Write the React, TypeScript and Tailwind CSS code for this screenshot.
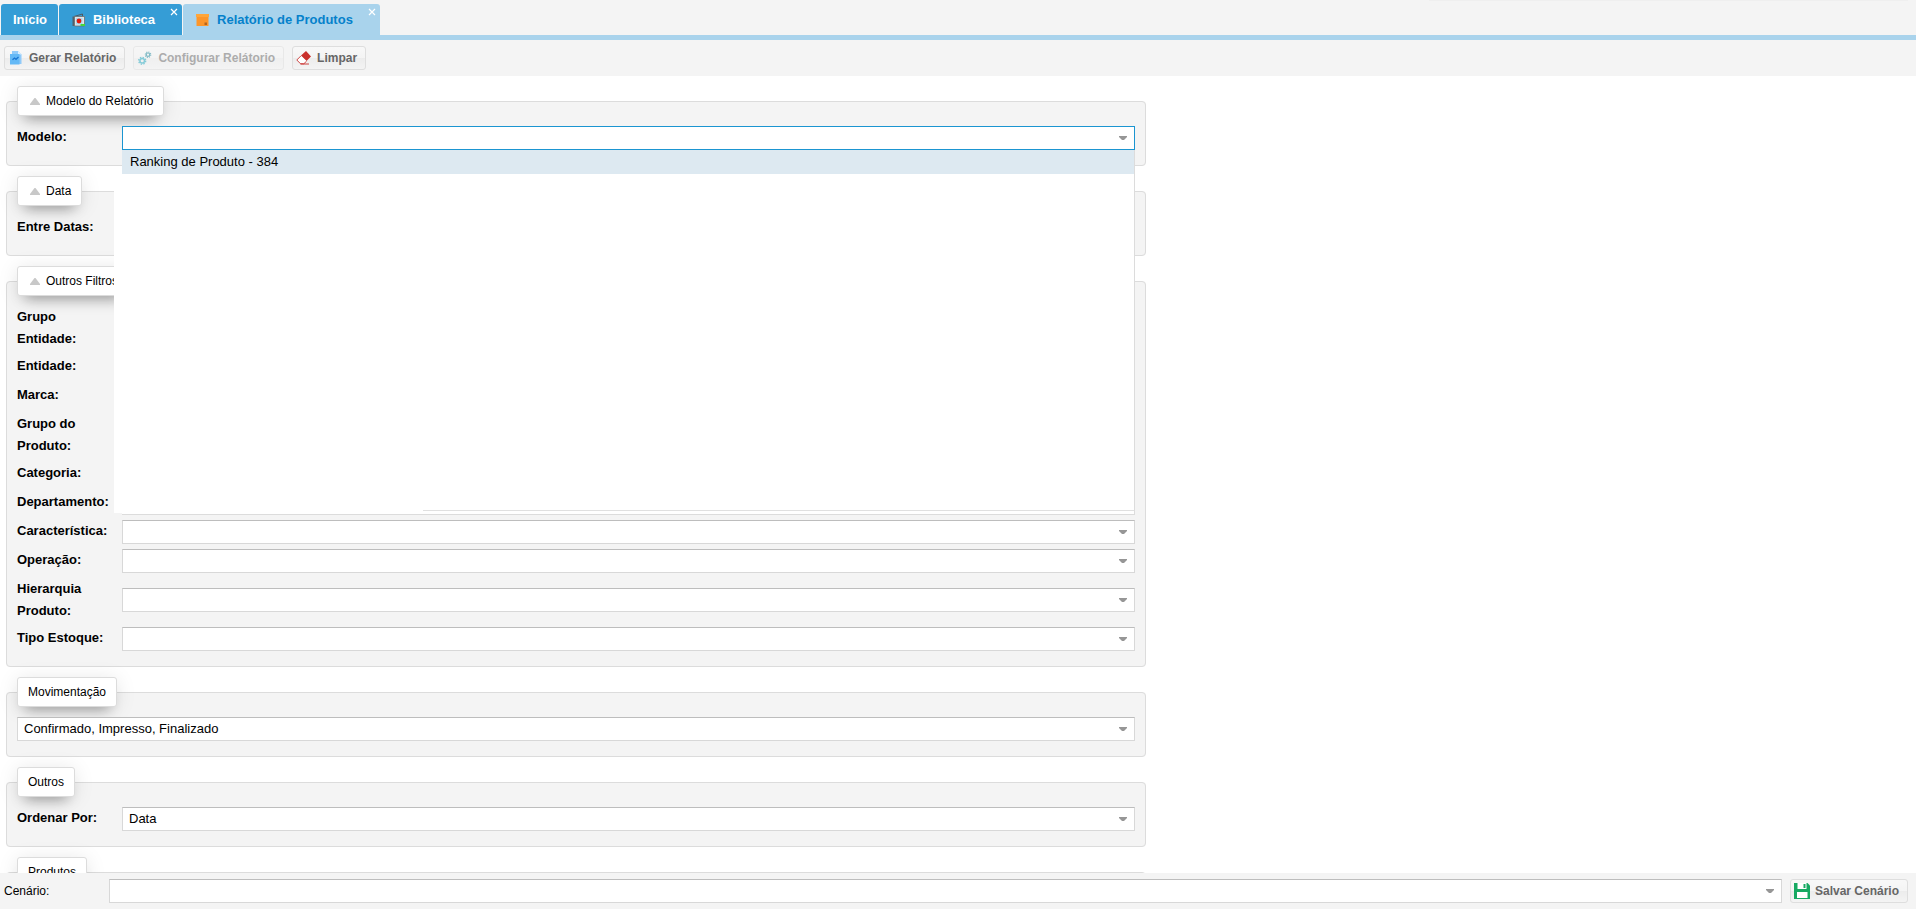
import React, {useState} from 'react'
import clsx from 'clsx'

const filterFields = [
	'Grupo Entidade',
	'Entidade',
	'Marca',
	'Grupo do Produto',
	'Categoria',
	'Departamento',
	'Característica',
	'Operação',
	'Hierarquia Produto',
	'Tipo Estoque',
]

export default function App() {
	return (
		<div className="flex h-screen flex-col bg-white font-['Liberation_Sans',Arial,sans-serif] text-xs text-black">
			<TabBar/>
			<Toolbar/>
			<main className="flex-1 overflow-y-auto px-1.5 pt-2.5 [scrollbar-width:none]">
				<form className="w-full max-w-[1140px]">
					<Panel title="Modelo do Relatório" collapsible>
						<Field label="Modelo">
							<ModelCombo/>
						</Field>
					</Panel>
					<Panel title="Data" collapsible>
						<Field label="Entre Datas">
							<Combo id="Entre Datas"/>
						</Field>
					</Panel>
					<Panel title="Outros Filtros" collapsible>
						{filterFields.map(name =>
							<Field key={name} label={name}>
								<Combo id={name}/>
							</Field>
						)}
					</Panel>
					<Panel title="Movimentação">
						<Combo id="movimentacao" label="Movimentação" options={['Confirmado, Impresso, Finalizado']}/>
					</Panel>
					<Panel title="Outros">
						<Field label="Ordenar Por">
							<Combo id="Ordenar Por" options={['Data']}/>
						</Field>
					</Panel>
					<Panel title="Produtos">
						<Combo id="produtos" label="Produtos"/>
					</Panel>
				</form>
			</main>
			<footer className="flex h-9 shrink-0 items-center bg-[#f4f4f4] pl-1 pr-2">
				<label htmlFor="cenario" className="w-[105px] shrink-0">Cenário:</label>
				<div className="mr-2 flex-1">
					<Combo id="cenario"/>
				</div>
				<ToolButton icon={<SaveIcon/>} text="Salvar Cenário"/>
			</footer>
		</div>
	)
}

const TabBar = () => (
	<nav className="shrink-0 border-b-5 border-[#a9d3ec] bg-[#f4f4f4]">
		<div className="h-1">
			<div className="mr-2 ml-auto h-px w-1/4 bg-[#efefef]"/>
		</div>
		<div className="flex gap-px pl-px">
			<Tab text="Início"/>
			<Tab text="Biblioteca" icon={<LibraryIcon/>} closable/>
			<Tab text="Relatório de Produtos" icon={<BoxIcon/>} closable active/>
		</div>
	</nav>
)

const Tab = (props: { text: string, icon?: React.ReactNode, closable?: boolean, active?: boolean }) => {
	const {text, icon, closable, active} = props
	return (
		<div
			className={clsx(
				'relative flex h-[31px] rounded-t-[3px] text-[13px] font-bold',
				active ? 'bg-[#a9d3ec] text-[#0581cb]' : 'bg-[#359dd6] text-white',
			)}
		>
			<button type="button" className={clsx('flex items-center gap-1.5 pl-3', closable ? 'pr-[27px]' : 'pr-[11px]')}>
				{icon}
				{text}
			</button>
			{closable &&
				<button type="button" aria-label="Fechar" className="absolute top-1 right-1 flex size-2 items-center justify-center text-white">
					<svg viewBox="0 0 8 8" className="size-2" stroke="currentColor" strokeWidth="1.2">
						<path d="M1 1l6 6M7 1l-6 6"/>
					</svg>
				</button>
			}
		</div>
	)
}

const Toolbar = () => (
	<div className="flex h-9 shrink-0 items-center gap-2 bg-[#f4f4f4] px-1">
		<ToolButton icon={<ReportIcon/>} text="Gerar Relatório"/>
		<ToolButton icon={<GearsIcon/>} text="Configurar Relátorio" disabled/>
		<ToolButton icon={<EraserIcon/>} text="Limpar"/>
	</div>
)

const ToolButton = (props: { icon: React.ReactNode, text: string, disabled?: boolean }) => (
	<button
		type="button"
		disabled={props.disabled}
		className="flex h-6 shrink-0 items-center gap-[5px] rounded-[3px] border border-[#dedede] bg-[linear-gradient(#f8f8f8,#f4f4f4_50%,#ececec_50%,#f4f4f4)] pr-2 pl-[3px] text-xs font-bold whitespace-nowrap text-[#666] disabled:opacity-50"
	>
		{props.icon}
		{props.text}
	</button>
)

const Panel = (props: { title: string, collapsible?: boolean, children: React.ReactNode }) => (
	<fieldset className="mb-2.5 rounded-[4px] border border-[#dcdcdc] bg-[#f4f4f4] px-2.5 pb-[15px]">
		<legend className="flex h-[30px] items-center gap-1.5 rounded-[3px] border border-[#dcdcdc] bg-white px-2.5 shadow-[0_2px_20px_rgba(0,0,0,0.1),0_10px_14px_-8px_rgba(0,0,0,0.36)]">
			{props.collapsible &&
				<button type="button" aria-label={`Recolher ${props.title}`} className="pl-0.5">
					<svg viewBox="0 0 10 7" className="h-[7px] w-2.5" fill="#c8c8c8"><path d="M4.500 0h1L10 6v1H0V6z"/></svg>
				</button>
			}
			{props.title}
		</legend>
		<div className="flex flex-col gap-[5px] pt-2.5">{props.children}</div>
	</fieldset>
)

const Field = (props: { label: string, children: React.ReactNode }) => (
	<div className="flex items-center">
		<label htmlFor={props.label} className="w-[105px] shrink-0 self-start pr-2.5 text-[13px] leading-[22px] font-bold">
			{props.label}:
		</label>
		<div className="min-w-0 flex-1">{props.children}</div>
	</div>
)

const Combo = (props: { id: string, label?: string, options?: string[], focused?: boolean }) => {
	const {id, label, options = [''], focused} = props
	return (
		<div className="relative h-6">
			<select
				id={id}
				aria-label={label}
				className={clsx(
					'block h-6 w-full appearance-none border bg-white pr-6 pl-1.5 text-[13px] outline-none',
					focused ? 'border-[#1b95d1]' : 'border-[#d8d8d8] border-t-[#bdbdbd]',
				)}
			>
				{options.map(option => <option key={option}>{option}</option>)}
			</select>
			<svg viewBox="0 0 8 4" className="pointer-events-none absolute top-2.5 right-2 h-1 w-2" fill="#969696">
				<path d="M0 0h8v1L5 4H3L0 1z"/>
			</svg>
		</div>
	)
}

const ModelCombo = () => {
	const [models] = useState(['Ranking de Produto - 384'])
	return (
		<div className="relative">
			<Combo id="Modelo" focused/>
			<div className="absolute inset-x-0 top-full z-10 h-[365px] border-r border-b border-[#dcdcdc] bg-white text-[13px]">
				<ul role="listbox" aria-label="Modelos">
					{models.map(model =>
						<li key={model} role="option" aria-selected className="h-6 bg-[#dde9f1] pl-2 leading-6">
							{model}
						</li>
					)}
				</ul>
				<div className="absolute top-6 bottom-px -left-2 w-2 bg-white"/>
				<div className="absolute right-0 bottom-[3px] left-[301px] h-px bg-[#e0e0e0]"/>
			</div>
		</div>
	)
}

const LibraryIcon = () => (
	<svg viewBox="0 0 16 16" className="size-4">
		<path d="M3 4.500l8.500-2.500v2" fill="none" stroke="#4d5961" strokeWidth="1"/>
		<path d="M1.500 4.500h3V14h-3z" fill="#52606b"/>
		<path d="M3.500 4.500h10V14h-10z" fill="#dfe5e8" stroke="#6b6e70" strokeWidth=".8"/>
		<path d="M5 6h6.500v6.500H5z" fill="#a9d9ee"/>
		<circle cx="8" cy="9" r="2.400" fill="#e3170a"/>
		<path d="M9.500 12h4.500v2H9.500z" fill="#45d63b"/>
	</svg>
)

const BoxIcon = () => (
	<svg viewBox="0 0 16 16" className="size-4">
		<path d="M1 2h13v3H1z" fill="#ffa63a"/>
		<path d="M1.500 5h12v9h-12z" fill="#fd962a"/>
		<path d="M9.500 10.500H12V13H9.500z" fill="#b5651d"/>
	</svg>
)

const ReportIcon = () => (
	<svg viewBox="0 0 16 16" className="size-4">
		<path d="M4 1h6l3.500 3.500V14H4z" fill="#90caf9"/>
		<path d="M10 1l3.500 3.500H10z" fill="#dcf0ff"/>
		<path d="M2 4h9.500v10.500H2z" fill="#64b9f6"/>
		<path d="M4.500 9.800L6.500 8l1.500 1.300L10.500 7" fill="none" stroke="#1976d2" strokeWidth="1.300"/>
	</svg>
)

const GearsIcon = () => (
	<svg viewBox="0 0 16 16" className="size-4" fill="none">
		<circle cx="5.200" cy="10.800" r="2.300" stroke="#18a4bd" strokeWidth="1.500"/>
		<circle cx="5.200" cy="10.800" r="3.500" stroke="#18a4bd" strokeWidth="1.400" strokeDasharray="1.400 1.349"/>
		<circle cx="11" cy="4.700" r="1.700" stroke="#15849a" strokeWidth="1.200"/>
		<circle cx="11" cy="4.700" r="2.700" stroke="#15849a" strokeWidth="1.200" strokeDasharray="1.100 1.021"/>
	</svg>
)

const EraserIcon = () => (
	<svg viewBox="0 0 16 16" className="size-4">
		<path d="M10 1l5 5.500-4.500 4.500L5 5.500z" fill="#c9302c"/>
		<path d="M4.900 5.900L.800 10l3.800 3.800h3.200l2.800-2.700" fill="#fff" stroke="#c9302c" strokeWidth=".9"/>
		<path d="M4.500 14h8.500" stroke="#c9302c" strokeWidth=".9"/>
	</svg>
)

const SaveIcon = () => (
	<svg viewBox="0 0 16 16" className="size-4">
		<path d="M0 0h13.500L16 2.500V16H0z" fill="#17a962"/>
		<path d="M3.500 0h9v6h-9z" fill="#fff"/>
		<path d="M9.500 1h2v4h-2z" fill="#17a962"/>
		<path d="M3 9h10.500v6H3z" fill="#fff"/>
	</svg>
)
